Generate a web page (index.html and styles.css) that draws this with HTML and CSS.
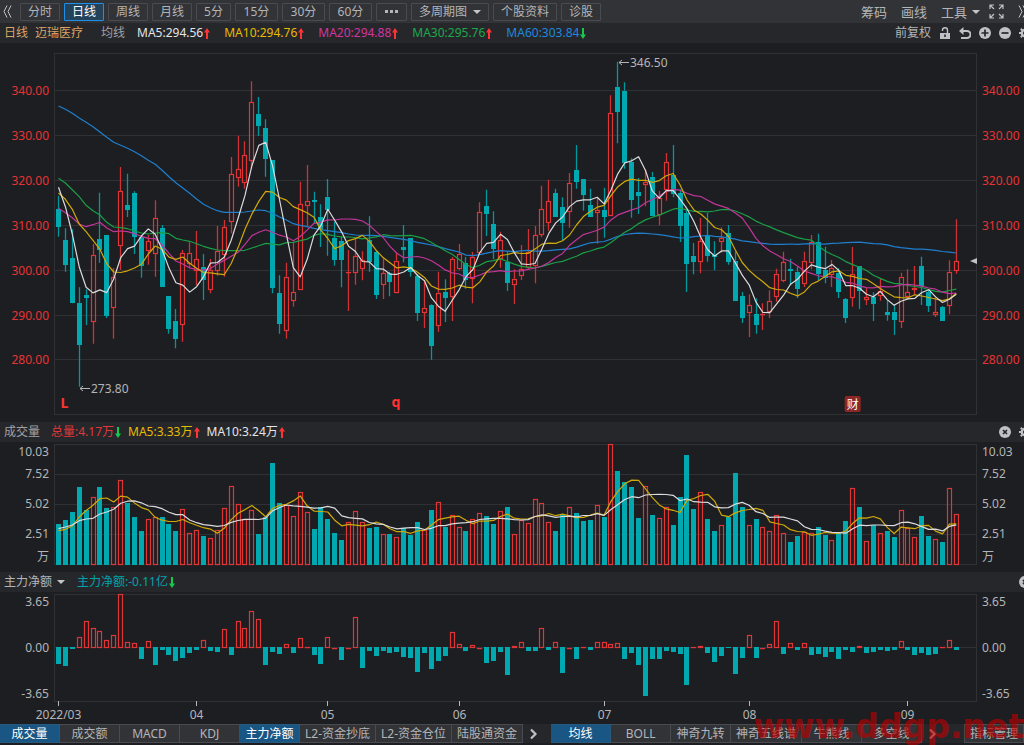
FILE: index.html
```
<!DOCTYPE html>
<html lang="zh-CN">
<head>
  <meta charset="UTF-8" />
  <meta name="viewport" content="width=device-width, initial-scale=1.0" />
  <title>迈瑞医疗 日线</title>
  <link rel="stylesheet" href="styles.css">
</head>
<body>
  <header class="toolbar">
    <button class="icon-btn collapse" aria-label="收起">
      <svg width="9" height="13" viewBox="0 0 9 13"><path d="M4 0.500L1 6.500l3 6M8 0.500L5 6.500l3 6" /></svg>
    </button>
    <nav class="periods">
      <button class="period">分时</button>
      <button class="period active">日线</button>
      <button class="period">周线</button>
      <button class="period">月线</button>
      <button class="period">5分</button>
      <button class="period minute">15分</button>
      <button class="period minute">30分</button>
      <button class="period minute">60分</button>
      <button class="period more" aria-label="更多"><i></i><i></i><i></i></button>
      <span class="dropdown boxed">
        <select aria-label="多周期图"><option>多周期图</option></select>
      </span>
      <button class="period">个股资料</button>
      <button class="period">诊股</button>
    </nav>
    <div class="tools">
      <button class="tool">筹码</button>
      <button class="tool">画线</button>
      <span class="dropdown">
        <select class="tool" aria-label="工具"><option>工具</option></select>
      </span>
      <button class="icon-btn fullscreen" aria-label="全屏">
        <svg width="15" height="15" viewBox="0 0 15 15"><path d="M1 5V1h4M1 1l4 4M10 1h4v4M14 1l-4 4M1 10v4h4M1 14l4-4M14 10v4h-4M14 14l-4-4" stroke-width="1.200" /></svg>
      </button>
      <button class="icon-btn expand" aria-label="展开">
        <svg width="9" height="13" viewBox="0 0 9 13"><path d="M1 0.500l3 6-3 6M5 0.500l3 6-3 6" /></svg>
      </button>
    </div>
  </header>

  <section class="info-bar">
    <span class="stock"><span>日线</span><span>迈瑞医疗</span></span>
    <span class="muted">均线</span>
    <div class="legend">
      <span class="white">MA5:294.56<svg class="up"><use href="#arrow-up" /></svg></span>
      <span class="yellow">MA10:294.76<svg class="up"><use href="#arrow-up" /></svg></span>
      <span class="pink">MA20:294.88<svg class="up"><use href="#arrow-up" /></svg></span>
      <span class="green">MA30:295.76<svg class="up"><use href="#arrow-up" /></svg></span>
      <span class="blue">MA60:303.84<svg class="down"><use href="#arrow-down" /></svg></span>
    </div>
    <div class="controls">
      <button class="text-btn">前复权</button>
      <button class="icon-btn" aria-label="锁定">
        <svg width="12" height="13" viewBox="0 0 12 13"><path d="M3.500 4V3.200a2.500 2.500 0 0 1 5 0V6" stroke-width="1.400" /><path class="solid" fill-rule="evenodd" d="M1 6h10v6H1zM5.200 7.500v2.500h1.600V7.500z" /></svg>
      </button>
      <button class="icon-btn" aria-label="撤销">
        <svg width="12" height="13" viewBox="0 0 12 13"><path d="M3 4h5a3.500 3.500 0 0 1 0 7H2" stroke-width="2" /><path class="solid" d="M0 4l4.500-4v8z" /></svg>
      </button>
      <button class="icon-btn" aria-label="放大">
        <svg width="12" height="12" viewBox="0 0 12 12"><circle class="solid" cx="6" cy="6" r="6" /><path class="cut" d="M6 2.500v7M2.500 6h7" /></svg>
      </button>
      <button class="icon-btn" aria-label="缩小">
        <svg width="12" height="12" viewBox="0 0 12 12"><circle class="solid" cx="6" cy="6" r="6" /><path class="cut" d="M2.500 6h7" /></svg>
      </button>
      <button class="icon-btn" aria-label="设置"><svg width="12" height="12"><use href="#gear" /></svg></button>
    </div>
  </section>
  <svg id="kline" class="chart kline"></svg>

  <section class="info-bar">
    <span class="muted">成交量</span>
    <div class="legend volume-legend">
      <span class="red">总量:4.17万<svg class="down"><use href="#arrow-down" /></svg></span>
      <span class="yellow">MA5:3.33万<svg class="up"><use href="#arrow-up" /></svg></span>
      <span class="white">MA10:3.24万<svg class="up"><use href="#arrow-up" /></svg></span>
    </div>
    <div class="controls">
      <button class="icon-btn" aria-label="关闭成交量"><svg width="12" height="12"><use href="#close" /></svg></button>
      <button class="icon-btn" aria-label="成交量设置"><svg width="12" height="12"><use href="#gear" /></svg></button>
    </div>
  </section>
  <svg id="volume" class="chart volume"></svg>

  <section class="info-bar">
    <span class="dropdown">
      <select aria-label="指标"><option>主力净额</option></select>
    </span>
    <div class="legend flow-legend">
      <span class="teal">主力净额:-0.11亿<svg class="down"><use href="#arrow-down" /></svg></span>
    </div>
    <div class="controls">
      <button class="icon-btn" aria-label="关闭主力净额"><svg width="12" height="12"><use href="#close" /></svg></button>
    </div>
  </section>
  <svg id="flow" class="chart flow"></svg>

  <footer class="tab-bar">
    <nav class="tabs">
      <button class="tab active">成交量</button>
      <button class="tab">成交额</button>
      <button class="tab">MACD</button>
      <button class="tab">KDJ</button>
      <button class="tab active">主力净额</button>
      <button class="tab">L2-资金抄底</button>
      <button class="tab">L2-资金仓位</button>
      <button class="tab">陆股通资金</button>
    </nav>
    <button class="icon-btn next" aria-label="更多副图指标"><svg width="8" height="12" viewBox="0 0 8 12"><path d="M1 1.500l4.500 4.500L1 10.500" stroke-width="2.200" /></svg></button>
    <nav class="tabs">
      <button class="tab active">均线</button>
      <button class="tab">BOLL</button>
      <button class="tab">神奇九转</button>
      <button class="tab">神奇五线谱</button>
      <button class="tab">牛熊线</button>
      <button class="tab">多空线</button>
    </nav>
    <button class="icon-btn next" aria-label="更多主图指标"><svg width="8" height="12" viewBox="0 0 8 12"><path d="M1 1.500l4.500 4.500L1 10.500" stroke-width="2.200" /></svg></button>
    <button class="tab manage">指标管理</button>
    <span class="watermark">www.ddgp.net</span>
  </footer>

  <svg class="defs" width="0" height="0">
    <symbol id="arrow-up" viewBox="0 0 6 11"><path d="M3 0l3 4.500H4V11H2V4.500H0z" /></symbol>
    <symbol id="arrow-down" viewBox="0 0 6 11"><path d="M3 11L0 6.500h2V0h2v6.500h2z" /></symbol>
    <symbol id="close" viewBox="0 0 12 12"><circle class="solid" cx="6" cy="6" r="6" /><path class="cut" d="M4 4l4 4M8 4l-4 4" /></symbol>
    <symbol id="gear" viewBox="0 0 12 12"><circle cx="6" cy="6" r="3.200" stroke-width="2.400" /><path d="M6 0v2M6 10v2M0 6h2M10 6h2M1.800 1.800l1.400 1.400M8.800 8.800l1.400 1.400M1.800 10.200l1.400-1.400M8.800 3.200l1.400-1.400" stroke-width="2" /></symbol>
  </svg>

  <script src="chart.js"></script>
</body>
</html>
```

FILE: styles.css
```
* {
  box-sizing: border-box;
}
body {
  margin: 0;
  min-height: 100vh;
  font-family: "Noto Sans", "Noto Sans CJK SC", sans-serif;
  font-size: 12px;
  line-height: 16px;
  background-color: #1d1e22;
  color: #b4b5b8;
  overflow-x: hidden;
}
button, select {
  font: inherit;
  color: inherit;
  background: none;
  border: 0;
  padding: 0;
  margin: 0;
  white-space: nowrap;
}
select {
  appearance: none;
}

/* top toolbar */
.toolbar {
  display: flex;
  align-items: center;
  height: 23px;
  background-color: #323337;
}
.collapse {
  width: 20px;
  padding-right: 6px;
}
.periods {
  display: flex;
  gap: 4px;
}
.period, .boxed {
  height: 18px;
  padding: 0 7px;
  line-height: 16px;
  border: 1px solid #4a4b50;
  border-radius: 1px;
}
.period.active {
  background-color: #244259;
  border-color: #1e90e8;
  color: #ffffff;
}
.minute {
  min-width: 43px;
}
.more {
  display: flex;
  gap: 2px;
  align-items: center;
  padding: 0 8px;
}
.more i {
  width: 3px;
  height: 3px;
  background-color: #b4b5b8;
}
.dropdown {
  display: flex;
  align-items: center;
  gap: 4px;
}
.dropdown::after {
  content: "";
  border: 4px solid transparent;
  border-top-color: #c4c5c8;
  border-bottom: 0;
}
.boxed {
  gap: 5px;
}
.tools {
  display: flex;
  align-items: center;
  gap: 14px;
  margin-left: auto;
  margin-right: -3px;
}
.tool {
  font-size: 13px;
}
.fullscreen {
  margin-left: -5px;
}
.icon-btn {
  display: flex;
  align-items: center;
  justify-content: center;
}
.icon-btn svg {
  fill: none;
  stroke: #c0c1c4;
}
.solid {
  fill: #c0c1c4;
  stroke: none;
}
.cut {
  stroke: #26272b;
  stroke-width: 1.7;
}
.defs {
  position: absolute;
}

/* indicator header rows */
.info-bar {
  display: flex;
  align-items: center;
  height: 20px;
  padding-left: 4px;
  background-color: #26272b;
}
.stock {
  display: flex;
  gap: 7px;
  margin-right: 18px;
  color: #d9a566;
}
.muted {
  color: #a0a1a5;
}
.legend {
  display: flex;
  gap: 14px;
  margin-left: 12px;
}
.volume-legend {
  gap: 7px;
  margin-left: 11px;
}
.legend span {
  display: flex;
  align-items: center;
  gap: 1px;
}
.legend svg {
  width: 6px;
  height: 11px;
}
.up {
  fill: #ff3333;
}
.down {
  fill: #16c94e;
}
.white { color: #e4e4e6; }
.yellow { color: #e6bc00; }
.pink { color: #d0369e; }
.green { color: #1ba94c; }
.blue { color: #1f88dd; }
.red { color: #e03838; }
.teal { color: #00a3ac; }
.controls {
  display: flex;
  align-items: center;
  gap: 8px;
  margin-left: auto;
  margin-right: -7px;
}

/* charts */
.chart {
  display: block;
  width: 100%;
}
.kline {
  height: 379px;
}
.volume {
  height: 130px;
}
.flow {
  height: 132px;
}
.chart text {
  fill: #b4b5b8;
}
.chart .price {
  fill: #e53434;
}
.chart .mark {
  fill: #ff3333;
  font-weight: bold;
  font-size: 14px;
}
.chart .badge-text {
  fill: #ffffff;
}
.badge {
  fill: #8c2627;
}
.pointer {
  fill: #c0c1c4;
}
.frame, .grid {
  fill: none;
  stroke: #303135;
  shape-rendering: crispEdges;
}
.tick, .note {
  fill: none;
  stroke: #b4b5b8;
}
.rise {
  fill: none;
  stroke: #e03535;
  stroke-width: 1.2;
}
.rise-wick {
  stroke: #d03134;
  stroke-width: 1.3;
}
.fall {
  fill: #00a8b0;
}
.fall-wick {
  stroke: #00989f;
  stroke-width: 1.3;
}
.line {
  fill: none;
  stroke-width: 1.2;
  stroke-linejoin: round;
}
.line.white { stroke: #dcdcde; }
.line.yellow { stroke: #cfa90a; }
.line.pink { stroke: #c2359a; }
.line.green { stroke: #1a9e46; }
.line.blue { stroke: #1f7fce; }

/* bottom tabs */
.tab-bar {
  display: flex;
  align-items: stretch;
  position: relative;
  height: 19px;
  background-color: #26272b;
}
.tabs {
  display: flex;
}
.tab {
  min-width: 60px;
  padding: 0 5px;
  background-color: #323337;
  border: 1px solid #4a4b50;
  border-left-width: 0;
  line-height: 16px;
}
.tab.active {
  background-color: #195683;
  border-color: #28597e;
  color: #ffffff;
}
.next {
  width: 28px;
  padding-right: 7px;
}
.manage {
  margin-left: auto;
  border-left-width: 1px;
}
.watermark {
  position: absolute;
  right: 0;
  bottom: -2px;
  font: bold 33px/36px "DejaVu Sans", sans-serif;
  color: rgba(190, 0, 0, 0.65);
  pointer-events: none;
}
```

FILE: chart.js
```
// all y values are stored in sub pixels, 3 per px
const SUB = 3;
const LEFT = 54;
const RIGHT = 47;
const SLOTS = 133.65;

// [r = rise / g = fall, high, body top, body bottom, low]
const candles = `
g437,478,531,560 g535,570,644,665 g538,624,757,760 g712,759,884,1010 g718,736,744,825
r582,615,815,881 g428,567,598,638 g555,555,798,804 r654,680,773,866 r351,424,586,660
g371,466,479,501 g424,429,560,612 g555,560,647,683 r555,574,601,644 r451,505,610,680
g525,534,710,710 g738,738,836,851 g777,812,866,895 r600,610,823,875 r577,610,640,655
r543,628,661,705 g612,650,688,750 r627,660,719,730 r528,602,661,677 r510,532,614,680
r321,373,514,550 r257,358,382,410 r274,316,398,416 r94,157,331,356 g141,193,227,258
g208,235,326,380 g330,330,712,730 g676,730,821,851 r638,680,841,866 r575,727,752,770
r395,463,719,720 r345,452,466,528 g425,451,454,520 g463,502,540,591 g387,440,480,617
g515,564,629,647 g560,573,629,712 r600,665,668,783 r565,619,667,704 r604,630,655,691
g499,570,634,665 g600,606,733,747 r625,670,704,747 g665,670,695,739 r606,632,729,730
g525,590,600,637 g563,563,666,680 g672,678,789,813 r690,773,788,834 g763,766,887,929
r665,728,827,845 g688,727,742,816 r621,628,740,813 r582,612,655,660 g621,640,690,716
r606,620,687,760 r457,487,608,615 g419,469,490,558 g484,522,597,628 r545,571,625,653
g603,636,697,723 r658,686,704,762 r585,656,676,690 r537,607,653,658 r528,556,647,700
r407,478,554,562 r389,454,518,542 g416,430,499,500 g442,472,518,570 r369,400,485,533
g285,360,396,416 g388,388,434,482 g416,465,499,500 r445,481,489,581 g413,480,499,563
r136,189,496,498 g35,111,186,280 g97,122,339,356 g325,336,449,503 g384,425,437,492
r358,397,404,469 g366,380,496,497 r423,444,494,526 r309,337,418,452 g285,375,431,442
g418,430,528,576 g480,490,641,726 g579,617,636,673 r504,574,634,670 g489,556,618,635
g574,614,621,661 r532,565,574,608 g525,549,636,644 g605,632,751,753 g726,738,804,819
r733,766,788,861 g745,792,825,851 r760,791,795,840 r721,754,786,804 r656,671,740,755
r605,636,691,697 g626,658,661,706 g650,665,717,744 r605,632,700,711 r555,577,637,658
g551,577,670,690 g590,660,684,700 r630,653,674,711 g655,668,724,744 g744,747,804,819
r591,671,743,770 g648,648,723,777 r713,742,750,765 g727,740,762,813 r685,722,738,752
g750,786,795,812 g765,785,809,855 r668,680,815,834 r658,727,740,748 r648,713,719,736
g620,648,708,765 g718,726,768,786 r742,787,794,801 g768,771,812,813 r631,665,767,793
r508,633,661,671`.trim().split(/\s+/).map(s => [s[0], ...s.slice(1).split(',').map(Number)]);

const volumes = [
  311, 299, 275, 202, 270, 232, 202, 264, 262, 181, 248, 291, 332, 297, 292, 291, 311, 332, 267, 339,
  330, 347, 353, 330, 265, 199, 253, 297, 270, 341, 291, 129, 249, 255, 289, 217, 277, 328, 262, 296,
  340, 361, 307, 273, 307, 323, 320, 341, 341, 350, 324, 344, 305, 330, 270, 246, 320, 286, 321, 332,
  297, 279, 287, 311, 273, 261, 341, 299, 309, 238, 250, 307, 332, 286, 262, 279, 302, 299, 256, 290,
  72, 153, 186, 201, 293, 199, 285, 295, 262, 314, 231, 104, 267, 216, 297, 332, 315, 290, 160, 261,
  316, 297, 321, 332, 286, 339, 367, 349, 336, 339, 320, 344, 359, 339, 303, 205, 261, 364, 315, 339,
  332, 352, 270, 325, 352, 287, 347, 356, 367, 205, 282
];

const flows = [
  -48, -54, -3, 32, 80, 61, 52, 23, 38, 161, 17, 14, -33, 20, -51, -7, -21, -39, -30, -15,
  -6, 23, -9, -12, 58, -21, 80, 61, 111, 88, -51, -12, -18, 11, -15, 29, 4, -21, -48, 32,
  1, -36, 1, 94, -60, -9, -24, -10, -15, -12, -27, -30, -72, -15, -63, -39, -24, 47, 11, -9,
  8, 1, -45, -39, -12, -81, 7, 17, -9, -9, 61, -6, 17, -75, 1, -33, 4, -6, 17, 17,
  11, 14, -33, -15, -51, -145, -33, -33, -9, -12, -18, -111, 4, 7, -15, -42, -24, -1, -78, -30,
  38, -30, 1, 11, 82, -18, 14, -6, 14, -21, -18, -27, -12, -33, -6, -12, 7, -15, -12, -6,
  -9, -6, 20, -6, -21, -15, -21, -18, 4, 23, -6
];

// averages of the days before there is enough history on screen
const head5 = [412, 470, 552, 650];
const head10 = [429, 448, 478, 522, 545, 571, 598, 641, 666];
const head20 = [475, 488, 503, 522, 530, 524, 517, 534, 545, 543, 545, 551, 559, 565, 566, 585, 610, 633, 642];
const head30 = [385, 399, 419, 440, 466, 482, 495, 517, 531, 533, 536, 543, 549, 552, 549, 548, 551, 565, 570, 574,
  581, 589, 595, 600, 602, 602, 602, 601, 594];
const head60 = [168, 178, 190, 204, 217, 230, 246, 262, 277, 286, 295, 305, 317, 331, 343, 361, 380, 398, 414, 430,
  447, 463, 473, 482, 487, 487, 487, 486, 483, 480, 482, 490, 501, 510, 521, 526, 530, 535, 539, 542,
  545, 548, 552, 555, 556, 556, 557, 559, 562, 565, 568, 572, 577, 581, 585, 590, 596, 601, 606];

function average(values, n, head) {
  return values.map((v, i) => {
    if (i < n - 1) return head[i];
    return values.slice(i - n + 1, i + 1).reduce((a, b) => a + b, 0) / n;
  });
}

function chart(id, offset) {
  const svg = document.getElementById(id);
  const width = svg.clientWidth;
  const right = width - RIGHT;
  const step = (right - LEFT) / SLOTS;
  let html = '';
  const c = {
    right,
    x: i => LEFT + 4.5 + i * step,
    y: v => v / SUB + offset,
    add: s => { html += s; },
    text: (x, y, s, cls = '', anchor = 'start') => {
      html += `<text x="${x}" y="${y}" class="${cls}" text-anchor="${anchor}">${s}</text>`;
    },
    // label on both sides of the plot
    label: (y, s, cls) => {
      c.text(49, y + 4, s, cls, 'end');
      c.text(right + 5, y + 4, s, cls);
    },
    frame: (top, bottom) => {
      html += `<rect class="frame" x="${LEFT + 0.5}" y="${top + 0.5}" width="${right - LEFT - 1}" height="${bottom - top}" />`;
    },
    grid: y => {
      html += `<path class="grid" d="M${LEFT} ${y + 0.5}H${right}" />`;
    },
    bar: (i, kind, top, bottom) => {
      const x = Math.round(c.x(i) - 2.5);
      const y = Math.round(top);
      const h = Math.max(1, Math.round(bottom) - y);
      html += kind === 'r'
        ? `<rect class="rise" x="${x + 0.5}" y="${y + 0.5}" width="4" height="${Math.max(0.1, h - 1)}" />`
        : `<rect class="fall" x="${x}" y="${y}" width="5" height="${h}" />`;
    },
    line: (values, cls) => {
      const points = values.map((v, i) => `${c.x(i).toFixed(1)},${c.y(v).toFixed(1)}`).join(' ');
      html += `<polyline class="line ${cls}" points="${points}" />`;
    },
    done: () => { svg.innerHTML = html; }
  };
  return c;
}

function drawKline() {
  const c = chart('kline', 7);
  c.frame(10, 371);
  [340, 330, 320, 310, 300, 290, 280].forEach((p, i) => {
    const y = Math.round(47 + i * 44.9);
    c.grid(y);
    c.label(y + 1, p.toFixed(2), 'price');
  });
  candles.forEach(([kind, high, top, bottom, low], i) => {
    const x = Math.round(c.x(i) - 2.5) + 2.5;
    const cls = kind === 'r' ? 'rise-wick' : 'fall-wick';
    c.add(`<path class="${cls}" d="M${x} ${c.y(high)}V${c.y(top)}M${x} ${c.y(bottom)}V${c.y(low)}" />`);
    c.bar(i, kind, c.y(top), c.y(bottom) + 0.3);
  });
  const close = candles.map(d => d[0] === 'r' ? d[2] : d[3]);
  c.line(average(close, 60, head60), 'blue');
  c.line(average(close, 30, head30), 'green');
  c.line(average(close, 20, head20), 'pink');
  c.line(average(close, 10, head10), 'yellow');
  c.line(average(close, 5, head5), 'white');

  // highest and lowest price
  [[81, 20, '346.50'], [3, 346, '273.80']].forEach(([i, y, s]) => {
    const x = Math.round(c.x(i)) + 1;
    c.add(`<path class="note" d="M${x + 10} ${y - 0.5}H${x}M${x + 3} ${y - 3}L${x} ${y - 0.5}l3 2.5" />`);
    c.text(x + 11, y + 4, s);
  });
  c.text(c.x(0) + 2, 365, 'L', 'mark');
  c.text(c.x(49) - 1, 364, 'q', 'mark', 'middle');
  c.add(`<rect class="badge" x="${c.x(115) - 8}" y="353" width="16" height="16" rx="2" />`);
  c.text(c.x(115), 366, '财', 'badge-text', 'middle');
  c.add(`<path class="pointer" d="M${c.right - 7} 218l7-3v6z" />`);
  c.done();
}

function drawVolume() {
  const c = chart('volume', -22);
  c.frame(2, 122);
  [32, 62, 92].forEach(c.grid);
  c.label(10, '10.03');
  c.label(32, '7.52');
  c.label(62, '5.02');
  c.label(92, '2.51');
  c.label(115, '万');
  volumes.forEach((v, i) => c.bar(i, candles[i][0], c.y(v), 123));
  c.line(average(volumes, 5, [332, 328, 318, 291]), 'yellow');
  c.line(average(volumes, 10, [326, 321, 315, 302, 297, 295, 282, 276, 268]), 'white');
  c.done();
}

function drawFlow() {
  const c = chart('flow', 0);
  c.frame(2, 109);
  c.grid(55);
  c.label(10, '3.65');
  c.label(56, '0.00');
  c.label(102, '-3.65');
  flows.forEach((v, i) => {
    if (v > 0) c.bar(i, 'r', 56 - v / SUB, 56);
    else c.bar(i, 'g', 55, 55 - v / SUB + 0.5);
  });
  [[0, '2022/03'], [20, '04'], [39, '05'], [58, '06'], [79, '07'], [100, '08'], [123, '09']].forEach(([i, s]) => {
    const x = Math.round(c.x(i) - 0.5) + 0.5;
    c.add(`<path class="tick" d="M${x} 109v5" />`);
    c.text(x, 127, s, '', 'middle');
  });
  c.done();
}

function draw() {
  drawKline();
  drawVolume();
  drawFlow();
}

draw();
window.addEventListener('resize', draw);
```
